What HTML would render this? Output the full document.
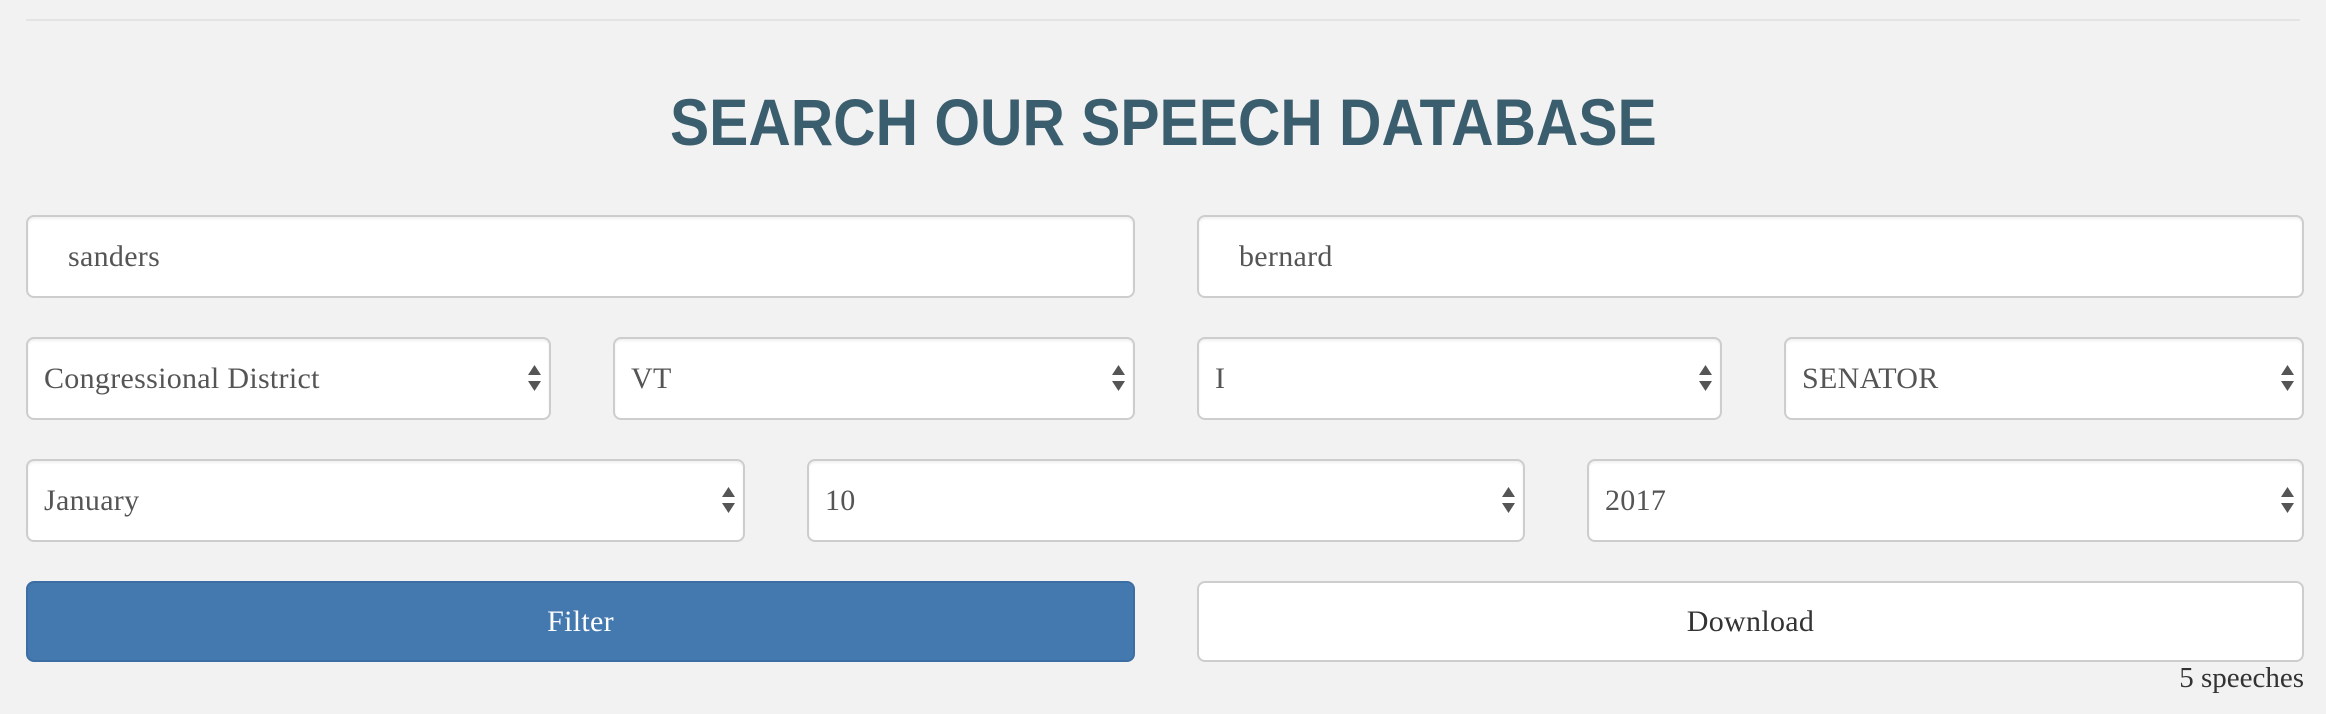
<!DOCTYPE html>
<html><head><meta charset="utf-8"><style>
html,body{margin:0;padding:0;}
body{width:2326px;height:714px;background:#f2f2f2;position:relative;overflow:hidden;font-family:"Liberation Serif",serif;}
.line{position:absolute;left:26px;right:26px;top:19px;height:2px;background:#e4e4e4;}
h1{position:absolute;left:0;width:2326px;top:74px;margin:0;text-align:center;font-family:"Liberation Sans",sans-serif;font-weight:bold;font-size:66px;line-height:96px;color:#3b5e6e;}
h1 span{display:inline-block;transform:scaleX(0.89);transform-origin:center;}
.box{position:absolute;box-sizing:border-box;background:#fff;border:2px solid #cdcdcd;border-radius:8px;box-shadow:inset 0 2px 2px rgba(0,0,0,0.06);color:#555;font-size:30px;letter-spacing:0.3px;display:flex;align-items:center;}
.sel{padding-left:16px;}
.inp{padding-left:40px;}
.arr{position:absolute;right:8px;top:50%;margin-top:-14px;width:13px;height:27px;}
.btn{justify-content:center;padding:0;}
.filter{background:#4479b0;border-color:#3d6ea3;color:#fff;box-shadow:none;}
.count{position:absolute;right:22px;top:662px;font-size:29px;color:#333;}
</style></head><body>
<div class="line"></div>
<h1><span>SEARCH OUR SPEECH DATABASE</span></h1>

<div class="box inp" style="left:26px;top:215px;width:1109px;height:83px;">sanders</div>
<div class="box inp" style="left:1197px;top:215px;width:1107px;height:83px;">bernard</div>

<div class="box sel" style="left:26px;top:337px;width:525px;height:83px;">Congressional District<svg class="arr" viewBox="0 0 13 27"><path d="M6.5 0L13 10H0Z M0 16H13L6.5 26Z" fill="#555"/></svg></div>
<div class="box sel" style="left:613px;top:337px;width:522px;height:83px;">VT<svg class="arr" viewBox="0 0 13 27"><path d="M6.5 0L13 10H0Z M0 16H13L6.5 26Z" fill="#555"/></svg></div>
<div class="box sel" style="left:1197px;top:337px;width:525px;height:83px;">I<svg class="arr" viewBox="0 0 13 27"><path d="M6.5 0L13 10H0Z M0 16H13L6.5 26Z" fill="#555"/></svg></div>
<div class="box sel" style="left:1784px;top:337px;width:520px;height:83px;">SENATOR<svg class="arr" viewBox="0 0 13 27"><path d="M6.5 0L13 10H0Z M0 16H13L6.5 26Z" fill="#555"/></svg></div>

<div class="box sel" style="left:26px;top:459px;width:719px;height:83px;">January<svg class="arr" viewBox="0 0 13 27"><path d="M6.5 0L13 10H0Z M0 16H13L6.5 26Z" fill="#555"/></svg></div>
<div class="box sel" style="left:807px;top:459px;width:718px;height:83px;">10<svg class="arr" viewBox="0 0 13 27"><path d="M6.5 0L13 10H0Z M0 16H13L6.5 26Z" fill="#555"/></svg></div>
<div class="box sel" style="left:1587px;top:459px;width:717px;height:83px;">2017<svg class="arr" viewBox="0 0 13 27"><path d="M6.5 0L13 10H0Z M0 16H13L6.5 26Z" fill="#555"/></svg></div>

<div class="box btn filter" style="left:26px;top:581px;width:1109px;height:81px;">Filter</div>
<div class="box btn" style="left:1197px;top:581px;width:1107px;height:81px;color:#333;box-shadow:none;">Download</div>
<div class="count">5 speeches</div>
</body></html>
